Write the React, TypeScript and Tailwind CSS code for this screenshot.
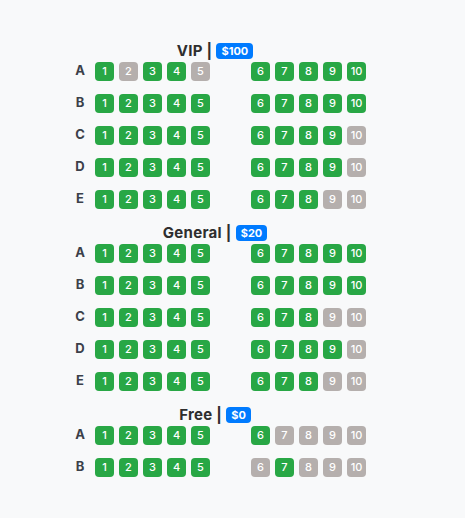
import React from 'react'

type Row = { label: string; taken: number[] }
type Section = { name: string; price: string; rows: Row[] }

const sections: Section[] = [
  {
    name: 'VIP',
    price: '$100',
    rows: [
      { label: 'A', taken: [2, 5] },
      { label: 'B', taken: [] },
      { label: 'C', taken: [10] },
      { label: 'D', taken: [10] },
      { label: 'E', taken: [9, 10] },
    ],
  },
  {
    name: 'General',
    price: '$20',
    rows: [
      { label: 'A', taken: [] },
      { label: 'B', taken: [] },
      { label: 'C', taken: [9, 10] },
      { label: 'D', taken: [10] },
      { label: 'E', taken: [9, 10] },
    ],
  },
  {
    name: 'Free',
    price: '$0',
    rows: [
      { label: 'A', taken: [7, 8, 9, 10] },
      { label: 'B', taken: [6, 8, 9, 10] },
    ],
  },
]

const Seat = ({ n, taken }: { n: number; taken: boolean }) => (
  <div
    className={`w-[19px] h-[19px] rounded-[4px] flex items-center justify-center text-[11px] font-medium text-white ${
      taken ? 'bg-[#b5afad]' : 'bg-[#28a745]'
    }`}
  >
    {n}
  </div>
)

const SeatRow = ({ row }: { row: Row }) => (
  <div className="flex items-center h-[20px] mb-3 pl-[6px] gap-[5px]">
    <div className="w-[20px] text-center text-[13px] font-bold text-[#3b4049]">{row.label}</div>
    {[1, 2, 3, 4, 5].map((n) => (
      <Seat key={n} n={n} taken={row.taken.includes(n)} />
    ))}
    <div className="w-[31px]" />
    {[6, 7, 8, 9, 10].map((n) => (
      <Seat key={n} n={n} taken={row.taken.includes(n)} />
    ))}
  </div>
)

export default function App() {
  return (
    <div
      className="min-h-screen bg-[#f8f9fa] pt-[39px] pl-[64px]"
      style={{ fontFamily: 'Inter, "Open Sans", sans-serif' }}
    >
      <div className="w-[302px]">
        {sections.map((s) => (
          <div key={s.name} className="pt-[3px]">
            <div className="mb-[1px] h-[18px] flex items-center justify-center text-[15px] tracking-[0.02em] font-bold text-[#2e2e2e]">
              {s.name} |
              <span className="ml-[4px] bg-[#007bff] text-white text-[11px] font-bold tracking-normal rounded-[4px] px-[5px] h-[16px] flex items-center">
                {s.price}
              </span>
            </div>
            {s.rows.map((r) => (
              <SeatRow key={r.label} row={r} />
            ))}
          </div>
        ))}
      </div>
    </div>
  )
}
